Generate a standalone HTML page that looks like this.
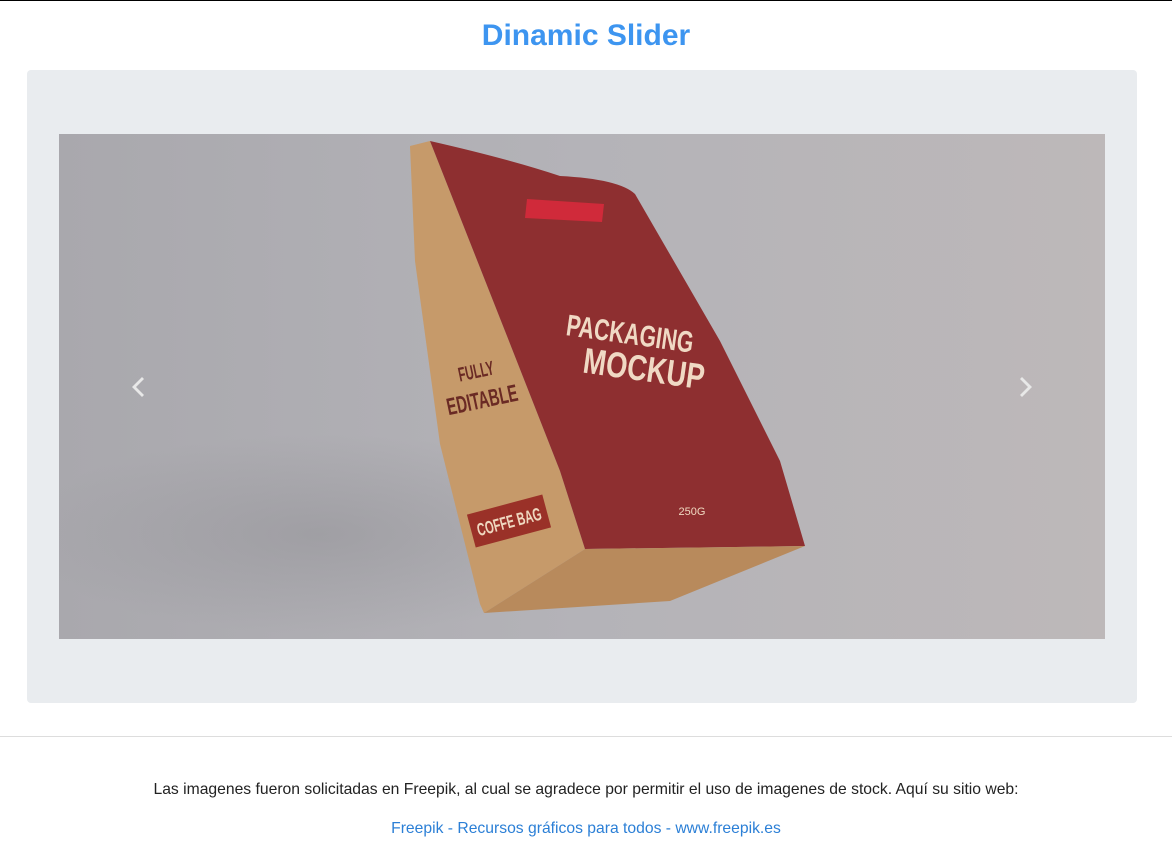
<!DOCTYPE html>
<html><head><meta charset="utf-8"><style>
body{margin:0;width:1172px;height:850px;overflow:hidden;background:#fff;font-family:"Liberation Sans",sans-serif;border-top:1px solid #000;box-sizing:border-box;position:relative}
h1{position:absolute;top:18px;left:0;width:100%;text-align:center;margin:0;font-size:30px;color:#3d95f0;font-weight:bold}
.jb{position:absolute;left:27px;top:69px;width:1110px;height:633px;background:#e9ecef;border-radius:4px}
svg{position:absolute;left:59px;top:133px}
hr{position:absolute;top:735px;left:0;width:100%;margin:0;border:0;border-top:1px solid #ddd}
.t{position:absolute;top:780px;width:100%;text-align:center;font-size:15.7px;color:#222}
.l{position:absolute;top:819px;width:100%;text-align:center;font-size:15.7px;color:#2b7fd6}
</style></head><body>
<h1>Dinamic Slider</h1>
<div class="jb"></div>
<svg width="1046" height="505" viewBox="0 0 1046 505">
<defs><linearGradient id="bg" x1="0" x2="1"><stop offset="0" stop-color="#a9a8ad"/><stop offset="0.5" stop-color="#b4b3b8"/><stop offset="1" stop-color="#bdb8b9"/></linearGradient>
<radialGradient id="sh" cx="0.5" cy="0.5" r="0.5"><stop offset="0" stop-color="#8e8d92" stop-opacity=".45"/><stop offset="1" stop-color="#8e8d92" stop-opacity="0"/></radialGradient></defs>
<rect width="1046" height="505" fill="url(#bg)"/>
<ellipse cx="260" cy="400" rx="300" ry="100" fill="url(#sh)"/>
<polygon points="351,12 371,7 446,197 501,337 526,415 425,479 421,470 381,310 356,127" fill="#c69a6a"/>
<path d="M371,7 Q450,25 501,42 Q560,45 576,60 L661,207 L721,327 L746,412 L526,415 L501,337 L446,197 Z" fill="#8e2f30"/>
<polygon points="526,415 746,412 611,467 425,479" fill="#b88a5c"/>
<polygon points="468,65 545,70 543,88 466,84" fill="#d02a3a"/>
<text x="571" y="210" font-family="Liberation Sans" font-size="30" font-weight="bold" fill="#f0d9c4" transform="rotate(8 571 200)" text-anchor="middle" textLength="128" lengthAdjust="spacingAndGlyphs">PACKAGING</text>
<text x="585" y="247" font-family="Liberation Sans" font-size="36" font-weight="bold" fill="#f0d9c4" transform="rotate(8 585 235)" text-anchor="middle" textLength="122" lengthAdjust="spacingAndGlyphs">MOCKUP</text>
<text x="417" y="244" font-size="20" font-weight="bold" fill="#6a2a24" text-anchor="middle" transform="rotate(-12 417 237)" textLength="36" lengthAdjust="spacingAndGlyphs">FULLY</text>
<text x="423" y="274" font-size="24" font-weight="bold" fill="#6a2a24" text-anchor="middle" transform="rotate(-12 423 265)" textLength="72" lengthAdjust="spacingAndGlyphs">EDITABLE</text>
<rect x="411" y="370" width="78" height="34" fill="#9a3128" transform="rotate(-15 450 387)"/>
<text x="450" y="394" font-size="18" font-weight="bold" fill="#efd8c0" text-anchor="middle" transform="rotate(-15 450 387)" textLength="66" lengthAdjust="spacingAndGlyphs">COFFE BAG</text>
<text x="633" y="381" font-size="11" fill="#efd8c0" text-anchor="middle">250G</text>
<polygon points="73,253 83,243 85,245 77,253 85,261 83,263" fill="#e8e8e8"/>
<polygon points="963,243 973,253 963,263 961,261 969,253 961,245" fill="#e8e8e8"/>
</svg>
<hr>
<div class="t">Las imagenes fueron solicitadas en Freepik, al cual se agradece por permitir el uso de imagenes de stock. Aquí su sitio web:</div>
<div class="l">Freepik - Recursos gráficos para todos - www.freepik.es</div>
</body></html>
